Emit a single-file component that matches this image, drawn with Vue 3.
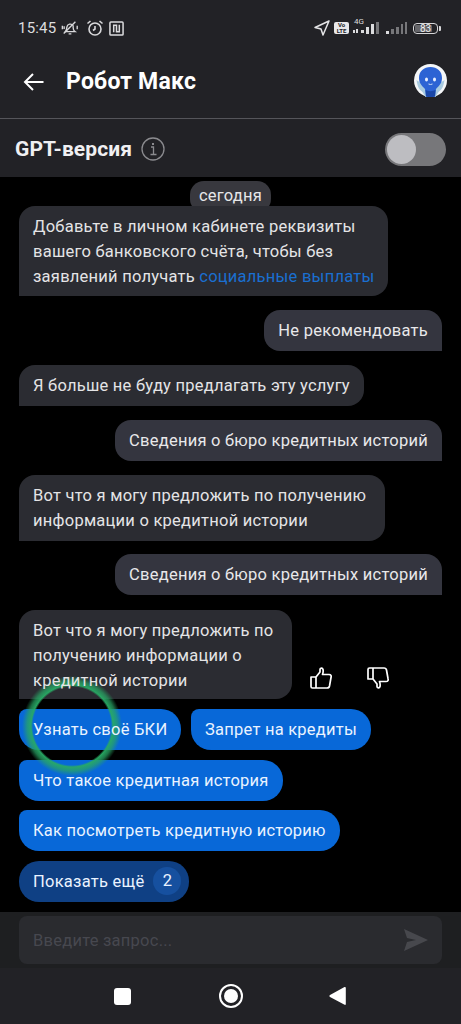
<script setup>
const chips = [
  ['Узнать своё БКИ', 'Запрет на кредиты'],
  ['Что такое кредитная история'],
  ['Как посмотреть кредитную историю'],
]
</script>

<template>
  <div class="screen">
    <header class="top">
      <div class="status">
        <span class="time">15:45</span>
        <svg class="si bell" width="18" height="18" viewBox="0 0 20 18" fill="none" stroke="#d8d8da" stroke-width="1.500">
          <path d="M5 13c1.500-1.500 1.500-3 1.500-5a3.800 3.800 0 0 1 7-1.500v2c0 2 .5 3.500 2 4.500z" />
          <path d="M3 15 16 2M8.500 15.500h3M1.500 6.500v4M3.500 7v3M18 6.500v4" />
        </svg>
        <svg class="si alarm" width="18" height="18" viewBox="0 0 18 18" fill="none" stroke="#d8d8da" stroke-width="1.600">
          <circle cx="9" cy="10" r="6" />
          <path d="M1.500 4.500 4.500 2M16.500 4.500 13.500 2M9 7v3l-2 1.500" />
        </svg>
        <svg class="si nfc" width="15" height="15" viewBox="0 0 16 16" fill="none" stroke="#dcdcde" stroke-width="1.600">
          <rect x="1" y="1" width="14" height="14" rx="1" />
          <path d="M5 12V4.500h3V10M11 4v7.500H8V6" />
        </svg>
        <span class="grow"></span>
        <svg width="16" height="16" viewBox="0 0 16 16" fill="none" stroke="#e4e4e6" stroke-width="1.500" stroke-linejoin="round">
          <path d="M15 1 1 7.500l6 1.500 2 6z" />
        </svg>
        <span class="volte">Vo<br />LTE</span>
        <span class="net">
          <small>4G</small>
          <svg width="28" height="14" viewBox="0 0 28 14" fill="#dcdcde">
            <rect x="0" y="9" width="2" height="3" />
            <rect x="3" y="8" width="2" height="4" />
            <rect x="8" y="9" width="3" height="3" />
            <rect x="13" y="6" width="3" height="7" />
            <rect x="18" y="3" width="3" height="10" />
            <rect x="23" y="1" width="3" height="12" fill="#77777a" />
          </svg>
        </span>
        <svg class="sig2" width="21" height="14" viewBox="0 0 21 14" fill="#77777a">
          <rect x="0" y="10" width="3" height="3" fill="#dcdcde" />
          <rect x="5" y="8" width="3" height="5" />
          <rect x="10" y="6" width="3" height="7" />
          <rect x="15" y="3" width="2" height="10" />
          <rect x="19" y="1" width="2" height="12" />
        </svg>
        <span class="battery"><span class="fill"></span><b>83</b></span>
        <span class="cap"></span>
      </div>
      <div class="title-row">
        <svg width="21" height="20" viewBox="0 0 21 20" fill="none" stroke="#fff" stroke-width="2">
          <path d="M20.500 10H2M10 2l-8 8 8 8" />
        </svg>
        <h1>Робот Макс</h1>
        <span class="grow"></span>
        <svg class="avatar" width="33" height="33" viewBox="0 0 33 33">
          <circle cx="16.500" cy="16.500" r="16.500" fill="#f4f6f8" />
          <path d="M2.500 16c1 6 2 9 6 12l3 5h10l3-5c4-3 5-6 6-12-2 2-4 2-7 2H9.500c-3 0-5 0-7-2z" fill="#a9cbe0" />
          <path d="M5 14C5 7 10 3 16.500 3S28 7 28 14c0 5-3 8-6 11l-1 7.500q-4.500 1-9 0l-1-7.500c-3-3-6-6-6-11z" fill="#2c63d4" />
          <path d="M11.500 26c3 1.500 7 1.500 10 0l-.5 6.500q-4.500 1-9 0z" fill="#1a47a8" />
          <ellipse cx="12.500" cy="15.500" rx="1.500" ry="2" fill="#e8f0ff" />
          <ellipse cx="20.500" cy="15.500" rx="1.500" ry="2" fill="#e8f0ff" />
          <path d="M14.500 20q2 1 4 0" stroke="#cfe0f7" fill="none" />
        </svg>
      </div>
      <div class="gpt-row">
        <span class="gpt">GPT-версия</span>
        <svg width="24" height="24" viewBox="0 0 24 24" fill="none" stroke="#8b8b8f" stroke-width="1.300">
          <circle cx="12" cy="12" r="11" />
          <path d="M10 10h2.500v7M9.500 17.500h6" />
          <path d="M12 6v2" stroke-width="2" />
        </svg>
        <span class="grow"></span>
        <span class="toggle"><span class="knob"></span></span>
      </div>
    </header>

    <main class="chat">
      <span class="date">сегодня</span>
      <div class="msg bot first">
        <span class="line">Добавьте в личном кабинете реквизиты</span>
        <span class="line">вашего банковского счёта, чтобы без</span>
        <span class="line"><span>заявлений получать </span><a>социальные выплаты</a></span>
      </div>
      <div class="msg me">Не рекомендовать</div>
      <div class="msg bot">Я больше не буду предлагать эту услугу</div>
      <div class="msg me">Сведения о бюро кредитных историй</div>
      <div class="msg bot wide">Вот что я могу предложить по получению информации о кредитной истории</div>
      <div class="msg me second">Сведения о бюро кредитных историй</div>
      <div class="rated">
        <div class="msg bot narrow"><span class="label">Вот что я могу предложить по получению информации о кредитной истории</span></div>
        <svg class="thumb" width="22" height="22" viewBox="0 0 22 22" fill="none" stroke="#fff" stroke-width="1.700" stroke-linejoin="round">
          <path d="M1 10h5v11H2.500A1.500 1.500 0 0 1 1 19.500zM6 10l4-5V2.500C10 1 12.500.5 13 2.500c.5 2-.5 5-.5 5H19c2 0 2.500 1.500 2 3l-1.500 8.500c-.3 1.500-1 2-2.500 2H6" />
        </svg>
        <svg class="thumb down" width="22" height="22" viewBox="0 0 22 22" fill="none" stroke="#fff" stroke-width="1.700" stroke-linejoin="round">
          <path d="M1 10h5v11H2.500A1.500 1.500 0 0 1 1 19.500zM6 10l4-5V2.500C10 1 12.500.5 13 2.500c.5 2-.5 5-.5 5H19c2 0 2.500 1.500 2 3l-1.500 8.500c-.3 1.500-1 2-2.500 2H6" />
        </svg>
      </div>
      <div class="chips">
        <div v-for="(row, i) in chips" :key="i" class="chip-row">
          <span v-for="c in row" :key="c" class="chip"><span class="label">{{ c }}</span></span>
        </div>
        <div class="chip-row">
          <span class="chip more"><span>Показать ещё</span><b class="count">2</b></span>
        </div>
      </div>
      <span class="touch"></span>
    </main>

    <div class="composer">
      <div class="input">
        <span>Введите запрос...</span>
        <svg width="24" height="24" viewBox="0 0 24 24" fill="#47484d">
          <path d="M0 1 24 12 0 23l3-9 9-2-9-2z" />
        </svg>
      </div>
    </div>

    <nav class="nav">
      <span class="square"></span>
      <span class="home"></span>
      <svg width="17" height="20" viewBox="0 0 17 20" fill="#fff"><path d="M16 1c.5 0 .8.300.8 1v16c0 .8-.6 1.200-1.200.8L1 11c-.8-.5-.8-1.500 0-2L15.500 1z" /></svg>
    </nav>
  </div>
</template>

<style>
html, body { margin: 0; background: #000; }
</style>

<style scoped>
.screen {
  width: 461px;
  height: 1024px;
  display: flex;
  flex-direction: column;
  overflow: hidden;
  background: #000;
  font-family: Roboto, "Noto Sans", sans-serif;
  color: #e8e8ea;
}
.grow { flex: 1; }
.top { background: #222226; height: 177px; flex: none; }
.status {
  height: 56px;
  display: flex;
  align-items: center;
  padding: 0 20px 0 18px;
  font-size: 15px;
  color: #dcdcde;
  box-sizing: border-box;
}
.time { letter-spacing: .2px; margin-right: 5px; }
.si { margin-right: 6px; flex: none; }
.bell { margin-right: 7px; }
.alarm { margin-right: 5px; }
.volte {
  width: 15px;
  height: 12px;
  margin: 0 4px 0 4px;
  background: #e8e8ea;
  color: #222226;
  border-radius: 2px;
  font-size: 6px;
  line-height: 6px;
  font-weight: 700;
  text-align: center;
}
.net { position: relative; display: flex; }
.net small { position: absolute; left: 1px; top: -4px; font-size: 8px; line-height: 9px; color: #dcdcde; }
.sig2 { margin-left: 5px; margin-right: 6px; }
.battery {
  position: relative;
  flex: none;
  width: 23px;
  height: 9px;
  border: 1.500px solid #d6d6d8;
  border-radius: 4px;
  display: block;
  overflow: hidden;
}
.fill { position: absolute; left: 1px; top: 1px; bottom: 1px; width: 17px; background: #66666a; border-radius: 1px; }
.battery b { position: absolute; inset: 0; text-align: center; font-size: 10px; line-height: 9px; font-weight: 400; color: #f0f0f0; }
.cap { width: 2px; height: 5px; background: #d6d6d8; margin-left: 1px; border-radius: 0 1px 1px 0; }
.title-row {
  height: 63px;
  display: flex;
  align-items: center;
  padding: 0 14px 11px 23px;
  border-bottom: 1px solid #55555a;
  box-sizing: border-box;
}
.title-row h1 { margin: 0 0 0 22px; font-size: 23px; font-weight: 700; color: #fff; letter-spacing: .2px; }
.avatar { margin-top: -2px; }
.gpt-row {
  height: 58px;
  display: flex;
  align-items: center;
  padding: 2px 15px 0 15px;
  box-sizing: border-box;
}
.gpt { font-size: 21px; font-weight: 700; color: #f0f0f2; margin-right: 9px; letter-spacing: .1px; }
.toggle {
  width: 61px;
  height: 33px;
  border-radius: 17px;
  background: #77777a;
  display: flex;
  align-items: center;
}
.knob { width: 29px; height: 29px; margin-left: 2px; border-radius: 50%; background: #bdbdc1; }
.chat {
  position: relative;
  flex: 1;
  min-height: 0;
  display: flex;
  flex-direction: column;
  align-items: flex-start;
  padding: 4px 19px 0;
  box-sizing: border-box;
}
.date {
  align-self: center;
  height: 32px;
  margin-bottom: -7px;
  padding: 0 9px;
  background: #38383e;
  border-radius: 14px;
  font-size: 16.500px;
  line-height: 30px;
  letter-spacing: .24px;
  color: #e6e6e8;
}
.msg {
  position: relative;
  box-sizing: border-box;
  padding: 8px 14px;
  font-size: 16.500px;
  line-height: 25px;
  letter-spacing: .24px;
  margin-bottom: 14px;
}
.line { display: block; white-space: nowrap; }
.label { position: relative; z-index: 2; }
.bot { background: #2b2c32; border-radius: 16px 16px 16px 0; color: #e4e4e6; max-width: 369px; }
.me { background: #34353f; border-radius: 16px 16px 0 16px; align-self: flex-end; color: #e8e8ea; }
.first { width: 369px; height: 90px; }
.wide { width: 366px; margin-bottom: 13px; }
.second { margin-bottom: 15px; }
.msg a { color: #1a6fd0; }
.rated { display: flex; align-items: center; margin-bottom: 10px; }
.rated .msg { margin-bottom: 0; }
.narrow { width: 273px; height: 89px; }
.thumb { margin: 46px 0 0 18px; flex: none; }
.thumb + .thumb { margin-left: 35px; }
.down { transform: rotate(180deg) scaleX(-1); }
.chips { display: flex; flex-direction: column; gap: 9.670px; }
.chip-row { display: flex; gap: 9.500px; }
.chip {
  height: 41px;
  padding: 0 14px;
  display: flex;
  align-items: center;
  background: #0868d8;
  border-radius: 8px 20px 20px 20px;
  font-size: 16.500px;
  letter-spacing: .24px;
  color: #eaf3ff;
  white-space: nowrap;
}
.more { background: #0f4084; padding-right: 8px; border-radius: 20px; }
.count {
  width: 28px;
  height: 28px;
  margin-left: 9px;
  border-radius: 50%;
  background: #16509f;
  text-align: center;
  line-height: 28px;
  font-weight: 400;
}
.touch {
  position: absolute;
  z-index: 1;
  left: 22px;
  top: 499px;
  width: 100px;
  height: 100px;
  pointer-events: none;
  background: radial-gradient(circle closest-side, rgba(40, 170, 100, 0) 78%, rgba(40, 170, 100, .95) 82%, rgba(40, 165, 100, .7) 90%, rgba(40, 160, 100, 0) 100%);
}
.composer {
  height: 56px;
  flex: none;
  background: #1e1f21;
  padding: 4px 19px 4px;
  box-sizing: border-box;
}
.input {
  height: 48px;
  background: #2a2b2f;
  border-radius: 8px;
  display: flex;
  align-items: center;
  justify-content: space-between;
  padding: 0 14px;
  font-size: 16.500px;
  letter-spacing: .24px;
  color: #47484f;
}
.nav {
  height: 56px;
  flex: none;
  background: #222226;
  display: flex;
  align-items: center;
  padding: 0 115px 0 114px;
  justify-content: space-between;
}
.square { width: 17px; height: 17px; background: #fff; border-radius: 3px; }
.home {
  width: 14px;
  height: 14px;
  margin-left: 2px;
  border-radius: 50%;
  background: #fff;
  outline: 2px solid #fff;
  outline-offset: 3px;
}
</style>
